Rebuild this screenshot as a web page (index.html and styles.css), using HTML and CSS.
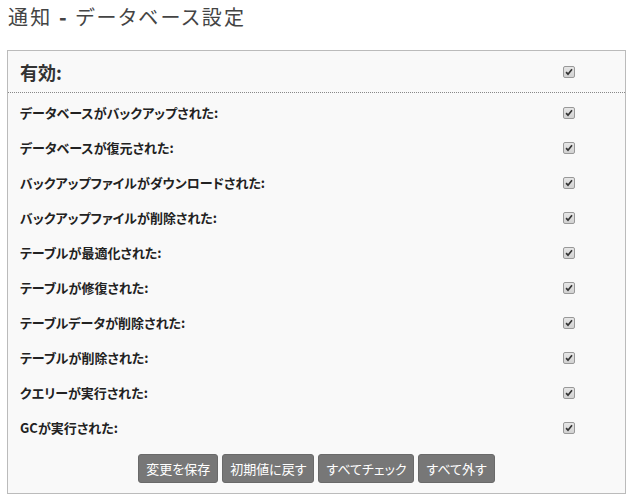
FILE: index.html
```html
<!DOCTYPE html>
<html lang="ja">
<head>
    <meta charset="UTF-8">
    <title>通知 - データベース設定</title>
    <link rel="stylesheet" href="styles.css">
</head>
<body>
<h2 class="page-title">通知 <b>-</b> データベース設定</h2>

<div class="settings-box">
    <div class="settings-head">
        <span class="head-label">有効:</span>
        <span class="check"><svg viewBox="0 0 12 12" width="12" height="12"><path d="M2.5 6.2 L4.8 8.6 L9.6 2.8" fill="none" stroke="#333" stroke-width="2"/></svg></span>
    </div>

    <ul class="settings-list">
        <li><span>データベースがバックアップされた:</span><span class="check"><svg viewBox="0 0 12 12" width="12" height="12"><path d="M2.5 6.2 L4.8 8.6 L9.6 2.8" fill="none" stroke="#333" stroke-width="2"/></svg></span></li>
        <li><span>データベースが復元された:</span><span class="check"><svg viewBox="0 0 12 12" width="12" height="12"><path d="M2.5 6.2 L4.8 8.6 L9.6 2.8" fill="none" stroke="#333" stroke-width="2"/></svg></span></li>
        <li><span>バックアップファイルがダウンロードされた:</span><span class="check"><svg viewBox="0 0 12 12" width="12" height="12"><path d="M2.5 6.2 L4.8 8.6 L9.6 2.8" fill="none" stroke="#333" stroke-width="2"/></svg></span></li>
        <li><span>バックアップファイルが削除された:</span><span class="check"><svg viewBox="0 0 12 12" width="12" height="12"><path d="M2.5 6.2 L4.8 8.6 L9.6 2.8" fill="none" stroke="#333" stroke-width="2"/></svg></span></li>
        <li><span>テーブルが最適化された:</span><span class="check"><svg viewBox="0 0 12 12" width="12" height="12"><path d="M2.5 6.2 L4.8 8.6 L9.6 2.8" fill="none" stroke="#333" stroke-width="2"/></svg></span></li>
        <li><span>テーブルが修復された:</span><span class="check"><svg viewBox="0 0 12 12" width="12" height="12"><path d="M2.5 6.2 L4.8 8.6 L9.6 2.8" fill="none" stroke="#333" stroke-width="2"/></svg></span></li>
        <li><span>テーブルデータが削除された:</span><span class="check"><svg viewBox="0 0 12 12" width="12" height="12"><path d="M2.5 6.2 L4.8 8.6 L9.6 2.8" fill="none" stroke="#333" stroke-width="2"/></svg></span></li>
        <li><span>テーブルが削除された:</span><span class="check"><svg viewBox="0 0 12 12" width="12" height="12"><path d="M2.5 6.2 L4.8 8.6 L9.6 2.8" fill="none" stroke="#333" stroke-width="2"/></svg></span></li>
        <li><span>クエリーが実行された:</span><span class="check"><svg viewBox="0 0 12 12" width="12" height="12"><path d="M2.5 6.2 L4.8 8.6 L9.6 2.8" fill="none" stroke="#333" stroke-width="2"/></svg></span></li>
        <li><span>GCが実行された:</span><span class="check"><svg viewBox="0 0 12 12" width="12" height="12"><path d="M2.5 6.2 L4.8 8.6 L9.6 2.8" fill="none" stroke="#333" stroke-width="2"/></svg></span></li>
    </ul>

    <div class="buttons">
        <button type="button">変更を保存</button>
        <button type="button">初期値に戻す</button>
        <button type="button">すべてチェック</button>
        <button type="button">すべて外す</button>
    </div>
</div>
</body>
</html>
```

FILE: styles.css
```css
* {
    box-sizing: border-box;
}
body {
    font-family: "Noto Sans CJK JP", "Liberation Sans", sans-serif;
    font-feature-settings: "palt";
    margin: 0;
    background: #fff;
    color: #333;
}

.page-title {
    margin: 0;
    padding: 4px 0 0 8px;
    height: 50px;
    font-size: 20px;
    font-weight: normal;
    line-height: 26px;
    color: #444;
    letter-spacing: 2.2px;
}

.page-title b {
    font-weight: 900;
}

.settings-box {
    margin: 0 7px;
    border: 1px solid #bbb;
    background-color: #f9f9f9;
    padding-bottom: 10px;
}

.settings-head {
    display: flex;
    align-items: center;
    justify-content: space-between;
    height: 42px;
    padding: 0 50px 0 12px;
    border-bottom: 1px dotted #888;
}

.head-label {
    font-size: 18px;
    font-weight: bold;
    color: #333;
}

.settings-list {
    list-style: none;
    margin: 0;
    padding: 2px 0 0;
}

.settings-list li {
    display: flex;
    align-items: center;
    justify-content: space-between;
    height: 35px;
    padding: 0 50px 0 12px;
    font-size: 13px;
    font-weight: bold;
    color: #222;
}

.check {
    display: block;
    width: 12px;
    height: 12px;
    border: 1px solid #999;
    border-radius: 2px;
    background: linear-gradient(#e6e6e6, #d2d2d2);
}

.check svg {
    display: block;
    width: 10px;
    height: 10px;
}

.buttons {
    display: flex;
    justify-content: center;
    gap: 4px;
    margin-top: 9px;
}

.buttons button {
    font-family: inherit;
    font-feature-settings: "palt";
    height: 29px;
    padding: 0 7px;
    font-size: 13px;
    color: #fff;
    background-color: #777;
    border: 1px solid #6a6a6a;
    border-radius: 3px;
}
```
